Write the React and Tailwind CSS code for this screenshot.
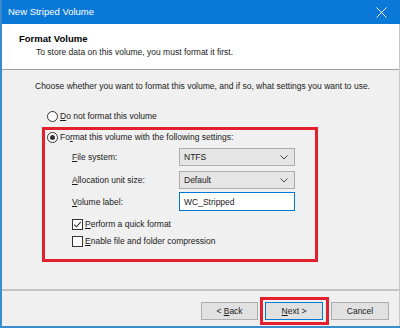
import React from "react";

function Radio({ checked }) {
  return (
    <span className="w-[11px] h-[11px] rounded-full border border-[#333333] bg-white flex items-center justify-center shrink-0">
      {checked && <span className="w-[5px] h-[5px] rounded-full bg-[#333333]" />}
    </span>
  );
}

function Checkbox({ checked }) {
  return (
    <span className="w-[11px] h-[11px] border border-[#333333] bg-white flex items-center justify-center shrink-0">
      {checked && (
        <svg width="9" height="9" viewBox="0 0 9 9">
          <path d="M1.2 4.6 L3.4 6.8 L7.8 1.8" fill="none" stroke="#333333" strokeWidth="1.1" />
        </svg>
      )}
    </span>
  );
}

function Select({ value }) {
  return (
    <div className="w-[116px] h-[18px] bg-[#e5e5e5] border border-[#acacac] flex items-center justify-between pl-[4px] pr-[6px]">
      <span>{value}</span>
      <svg width="8" height="5" viewBox="0 0 8 5">
        <path d="M0.5 0.5 L4 4 L7.5 0.5" fill="none" stroke="#444444" strokeWidth="1" />
      </svg>
    </div>
  );
}

function Key({ children }) {
  return <span className="underline underline-offset-[1px]">{children}</span>;
}

export default function App() {
  return (
    <div className="w-[400px] h-[328px] flex flex-col border-l-[2px] border-b-[2px] border-[#3b8ccf] bg-[#f0f0f0] text-[8.5px] text-[#1a1a1a] font-['Liberation_Sans',Arial,sans-serif] leading-[14px] overflow-hidden">
      {/* title bar */}
      <div className="h-[24px] bg-[#0a78d7] flex items-center justify-between pl-[6px] pr-[13px] text-white text-[9.5px]">
        <span>New Striped Volume</span>
        <svg width="11" height="11" viewBox="0 0 11 11">
          <path d="M0.5 0.5 L10.5 10.5 M10.5 0.5 L0.5 10.5" stroke="#ffffff" strokeWidth="1" />
        </svg>
      </div>

      <div className="flex-1 flex flex-col border-r border-[#c8c8c8]">
        {/* header */}
        <div className="h-[46px] bg-white border-b border-[#a0a0a0] pt-[8px] pl-[17px]">
          <div className="font-bold text-[9.5px] leading-[14px] text-black">Format Volume</div>
          <div className="pl-[17px] leading-[12px]">To store data on this volume, you must format it first.</div>
        </div>

        {/* body */}
        <div className="flex-1 pt-[9px] pl-[33px]">
          <div>Choose whether you want to format this volume, and if so, what settings you want to use.</div>

          <div className="mt-[16px] ml-[12px] flex items-center gap-[2px]">
            <Radio />
            <span>
              <Key>D</Key>o not format this volume
            </span>
          </div>

          <div className="mt-[4px] ml-[7px] w-[276px] h-[135px] border-[3px] border-[#e5202e] pl-[2px]">
            <div className="flex items-center gap-[2px]">
              <Radio checked />
              <span>
                Fo<Key>r</Key>mat this volume with the following settings:
              </span>
            </div>

            <div className="pl-[25px] pr-[20px] flex flex-col">
              <div className="mt-[4px] flex items-center justify-between">
                <span>
                  <Key>F</Key>ile system:
                </span>
                <Select value="NTFS" />
              </div>
              <div className="mt-[5px] flex items-center justify-between">
                <span>
                  <Key>A</Key>llocation unit size:
                </span>
                <Select value="Default" />
              </div>
              <div className="mt-[3px] flex items-center justify-between">
                <span>
                  <Key>V</Key>olume label:
                </span>
                <div className="w-[116px] h-[19px] bg-white border border-[#0078d7] flex items-center pl-[4px]">
                  WC_Stripped
                </div>
              </div>
              <div className="mt-[6px] flex items-center gap-[2px]">
                <Checkbox checked />
                <span>
                  <Key>P</Key>erform a quick format
                </span>
              </div>
              <div className="mt-[3px] flex items-center gap-[2px]">
                <Checkbox />
                <span>
                  <Key>E</Key>nable file and folder compression
                </span>
              </div>
            </div>
          </div>
        </div>

        {/* footer */}
        <div className="h-[37px] border-t-[2px] border-[#c4c4c4] flex items-start pl-[199px] pt-[6px]">
          <button type="button" className="w-[57px] h-[18px] bg-[#e1e1e1] border border-[#adadad] mt-[5px]">
            &lt; <Key>B</Key>ack
          </button>
          <div className="ml-[2px] border-[3px] border-[#e5202e] pl-[2px] pr-[3px] py-[2px]">
            <button type="button" className="w-[58px] h-[18px] bg-[#e1e1e1] border border-[#0078d7] block">
              <Key>N</Key>ext &gt;
            </button>
          </div>
          <button type="button" className="ml-[2px] w-[58px] h-[18px] bg-[#e1e1e1] border border-[#adadad] mt-[5px]">
            Cancel
          </button>
        </div>
      </div>
    </div>
  );
}
